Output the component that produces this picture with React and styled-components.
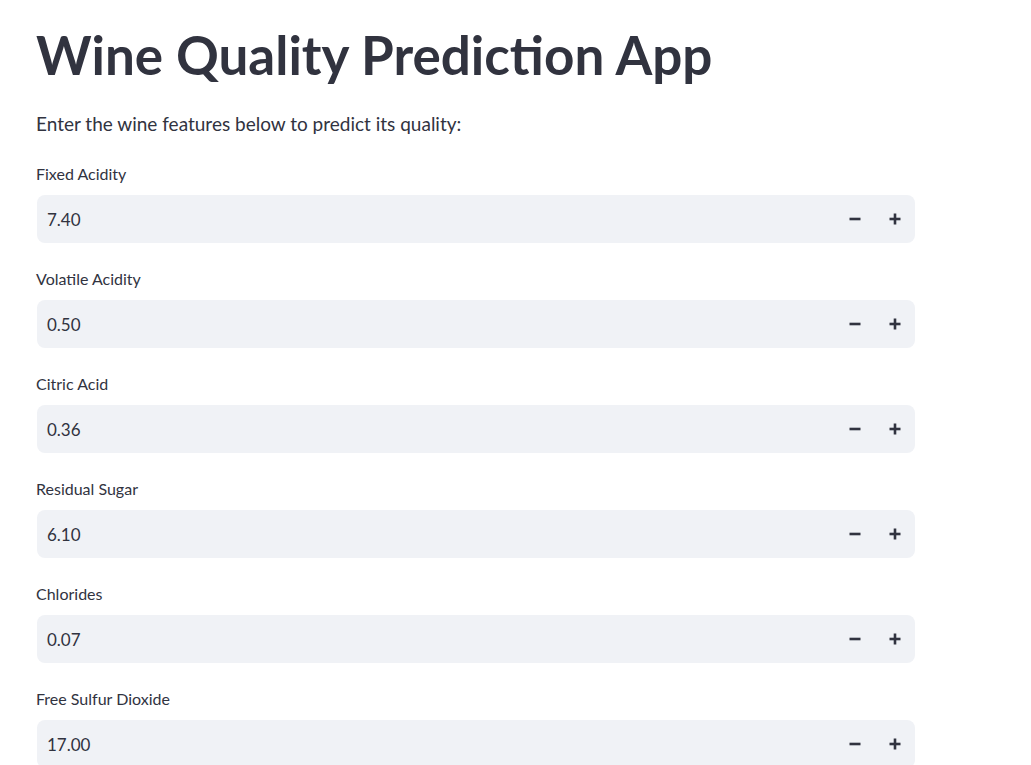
import React from 'react';
import styled, { createGlobalStyle } from 'styled-components';

const GlobalStyle = createGlobalStyle`
  body {
    margin: 0;
    background: #ffffff;
    font-family: Lato, "Noto Sans", sans-serif;
    color: #31333f;
  }
`;

const FEATURES = [
  { label: 'Fixed Acidity', value: '7.40' },
  { label: 'Volatile Acidity', value: '0.50' },
  { label: 'Citric Acid', value: '0.36' },
  { label: 'Residual Sugar', value: '6.10' },
  { label: 'Chlorides', value: '0.07' },
  { label: 'Free Sulfur Dioxide', value: '17.00' },
];

const Main = styled.main`
  width: 915px;
  padding: 20px 0 0 36px;
  height: 765px;
  overflow: hidden;
  box-sizing: border-box;
`;

const Title = styled.h1`
  margin: 0;
  font-size: 53px;
  font-weight: 700;
  line-height: 70px;
`;

const Intro = styled.p`
  margin: 20px 0 23px;
  font-size: 19px;
  line-height: 28px;
`;

const Field = styled.div`
  display: flex;
  flex-direction: column;
  gap: 8px;
  margin-bottom: 23px;
`;

const Label = styled.label`
  font-size: 16px;
  line-height: 26px;
`;

const InputBox = styled.div`
  display: flex;
  align-items: center;
  height: 48px;
  margin-left: 1px;
  border-radius: 8px;
  background: #f0f2f6;
`;

const Value = styled.span`
  flex: 1;
  padding-left: 10px;
  font-size: 17px;
`;

const StepButton = styled.button`
  display: flex;
  align-items: center;
  justify-content: center;
  width: 40px;
  height: 48px;
  padding: 0;
  border: none;
  background: transparent;
  color: #31333f;
  cursor: pointer;
`;

const Minus = () => (
  <svg width="12" height="12" viewBox="0 0 12 12">
    <rect x="0.5" y="4.7" width="11" height="2.6" fill="currentColor" />
  </svg>
);

const Plus = () => (
  <svg width="12" height="12" viewBox="0 0 12 12">
    <rect x="0.5" y="4.7" width="11" height="2.6" fill="currentColor" />
    <rect x="4.7" y="0.5" width="2.6" height="11" fill="currentColor" />
  </svg>
);

const NumberField = ({ label, value }) => (
  <Field>
    <Label>{label}</Label>
    <InputBox>
      <Value>{value}</Value>
      <StepButton aria-label="decrement">
        <Minus />
      </StepButton>
      <StepButton aria-label="increment">
        <Plus />
      </StepButton>
    </InputBox>
  </Field>
);

export default function App() {
  return (
    <>
      <GlobalStyle />
      <Main>
        <Title>Wine Quality Prediction App</Title>
        <Intro>Enter the wine features below to predict its quality:</Intro>
        {FEATURES.map((f) => (
          <NumberField key={f.label} label={f.label} value={f.value} />
        ))}
      </Main>
    </>
  );
}
